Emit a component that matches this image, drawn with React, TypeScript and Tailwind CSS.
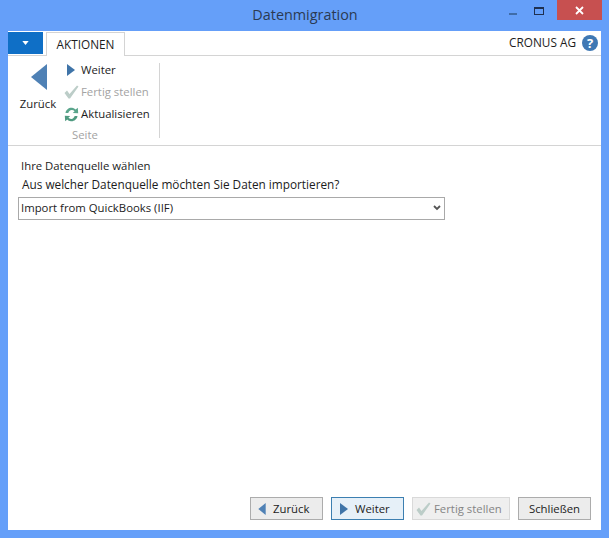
import React from 'react';

const font = { fontFamily: '"Open Sans", "Noto Sans", sans-serif' };

function ArrowLeft({ className }: { className: string }) {
  return (
    <svg viewBox="0 0 16 26" className={className}>
      <path d="M16 0 L0 13 L16 26 Z" fill="#4f81b5" />
    </svg>
  );
}

function ArrowRight({ className, color = '#3f74a8' }: { className: string; color?: string }) {
  return (
    <svg viewBox="0 0 8 12" className={className}>
      <path d="M0 0 L8 6 L0 12 Z" fill={color} />
    </svg>
  );
}

function Check({ className }: { className: string }) {
  return (
    <svg viewBox="0 0 15 14" className={className}>
      <path d="M0.5 8 L3 5.5 L5.5 9 L13 0.5 L14.5 1.5 L6 13.5 L4.5 13.5 Z" fill="#bccdc8" />
    </svg>
  );
}

function Refresh() {
  return (
    <svg viewBox="0 0 15 15" className="h-[15px] w-[15px]">
      <path d="M1.5 6 C2 2.5 5 0.5 8 0.8 C9.6 1 10.8 1.7 11.7 2.6 L13.8 0.8 L14.2 6.3 L8.8 6 L10.6 4.2 C9.8 3.4 8.7 3 7.6 3.1 C6 3.2 4.8 4.4 4.3 6 Z" fill="#5aa58c" />
      <path d="M13.5 9 C13 12.5 10 14.5 7 14.2 C5.4 14 4.2 13.3 3.3 12.4 L1.2 14.2 L0.8 8.7 L6.2 9 L4.4 10.8 C5.2 11.6 6.3 12 7.4 11.9 C9 11.8 10.2 10.6 10.7 9 Z" fill="#4f9a80" />
    </svg>
  );
}

function RibbonRow({ icon, label, muted }: { icon: React.ReactNode; label: string; muted?: boolean }) {
  return (
    <div className="flex h-[22px] shrink-0 items-center">
      <div className="flex w-[17px] justify-start">{icon}</div>
      <span className={muted ? 'text-[#a3a3a3]' : 'text-[#1c1c1c]'}>{label}</span>
    </div>
  );
}

function FooterButton({
  icon,
  label,
  className,
}: {
  icon?: React.ReactNode;
  label: string;
  className: string;
}) {
  return (
    <button className={`flex h-[23px] items-center border ${className}`}>
      {icon}
      <span>{label}</span>
    </button>
  );
}

export default function App() {
  return (
    <div className="flex h-[538px] w-[609px] flex-col bg-[#659ff9] text-[11.35px] leading-none" style={font}>
      {/* Title bar */}
      <div className="relative flex h-[31px] shrink-0 items-center justify-center">
        <span className="pl-px text-[14.4px] text-[#2b3a52]">Datenmigration</span>
        <div className="absolute right-[7px] top-0 flex items-start">
          <div className="mr-[17px] mt-[13px] h-[2px] w-[8px] bg-[#3f6ca8]" />
          <div className="mr-[13px] mt-[7px] h-[8px] w-[10px] border border-t-[2px] border-[#1f3050]" />
          <div className="flex h-[20px] w-[45px] items-center justify-center bg-[#c75050]">
            <svg viewBox="0 0 9 9" className="h-[9px] w-[9px]">
              <path d="M1 1 L8 8 M8 1 L1 8" stroke="#fff" strokeWidth="1.8" />
            </svg>
          </div>
        </div>
      </div>

      {/* Client area */}
      <div className="mx-[8px] mb-[8px] flex flex-1 flex-col bg-white">
        <div className="relative flex h-[25px] shrink-0 items-end border-b border-[#d4d4d4]">
          <div className="mb-px flex h-[22px] w-[35px] items-center justify-center self-end bg-[#0f6fc6]">
            <svg viewBox="0 0 8 5" className="h-[4px] w-[7px]">
              <path d="M0 0 L8 0 L4 5 Z" fill="#fff" />
            </svg>
          </div>
          <div className="relative top-px ml-[3px] flex h-[24px] w-[79px] items-center justify-center border border-b-0 border-[#d4d4d4] bg-white text-[11.8px] text-[#1c1c1c]">
            AKTIONEN
          </div>
          <div className="ml-auto mr-[3px] flex items-center gap-[6px] self-center">
            <span className="text-[11.8px] text-[#1c1c1c]">CRONUS AG</span>
            <div className="flex h-[16px] w-[16px] items-center justify-center rounded-full bg-[#3f78b4] text-[13px] font-bold text-white">
              ?
            </div>
          </div>
        </div>

        {/* Ribbon */}
        <div className="flex h-[90px] shrink-0 border-b border-[#d4d4d4] pt-[3px]">
          <div className="flex w-[56px] shrink-0 flex-col items-center pl-[4px]">
            <ArrowLeft className="ml-[1px] mt-[5px] h-[26px] w-[16px]" />
            <span className="mt-[8px] text-[#1c1c1c]">Zurück</span>
          </div>
          <div className="flex w-[95px] shrink-0 flex-col">
            <RibbonRow icon={<ArrowRight className="ml-[3px] h-[12px] w-[8px]" />} label="Weiter" />
            <RibbonRow icon={<Check className="h-[14px] w-[15px]" />} label="Fertig stellen" muted />
            <RibbonRow icon={<Refresh />} label="Aktualisieren" />
            <span className="ml-[8px] mt-[4px] text-[#a3a3a3]">Seite</span>
          </div>
          <div className="mt-[4px] h-[75px] w-px bg-[#d4d4d4]" />
        </div>

        {/* Form */}
        <div className="flex flex-1 flex-col px-[10px]">
          <div className="ml-[3px] mt-[14px] text-[#1c1c1c]">Ihre Datenquelle wählen</div>
          <div className="ml-[4px] mt-[8px] text-[11.8px] text-[#1c1c1c]">Aus welcher Datenquelle möchten Sie Daten importieren?</div>
          <div className="mt-[6px] flex h-[23px] w-[427px] items-center justify-between border border-[#a9a9a9] pb-px pl-[2px] pr-[3px] text-[#1c1c1c]">
            <span>Import from QuickBooks (IIF)</span>
            <svg viewBox="0 0 8 6" className="h-[6px] w-[8px]">
              <path d="M1 1 L4 4 L7 1" fill="none" stroke="#555" strokeWidth="1.8" />
            </svg>
          </div>
        </div>

        {/* Footer */}
        <div className="flex justify-end gap-[8px] pb-[10px] pr-[10px]">
          <FooterButton
            icon={<ArrowLeft className="h-[12px] w-[8px]" />}
            label="Zurück"
            className="w-[73px] gap-[7px] border-[#acacac] bg-[#ececec] pl-[7px] text-[#1c1c1c]"
          />
          <FooterButton
            icon={<ArrowRight className="h-[12px] w-[8px]" />}
            label="Weiter"
            className="w-[73px] gap-[7px] border-[#3c7fb1] bg-[#e6f0f8] pl-[8px] text-[#1c1c1c]"
          />
          <FooterButton
            icon={<Check className="h-[14px] w-[15px]" />}
            label="Fertig stellen"
            className="w-[98px] gap-[3px] border-[#d9d9d9] bg-[#efefef] pl-[3px] text-[#858585]"
          />
          <FooterButton
            label="Schließen"
            className="w-[73px] justify-center border-[#acacac] bg-[#ececec] text-[#1c1c1c]"
          />
        </div>
      </div>
    </div>
  );
}
